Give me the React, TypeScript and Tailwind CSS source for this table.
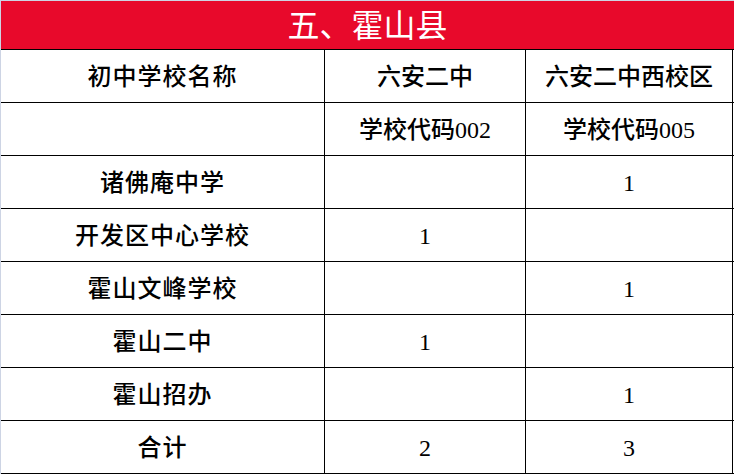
import React from "react";

const rows: [string, string, string][] = [
  ["初中学校名称", "六安二中", "六安二中西校区"],
  ["", "学校代码002", "学校代码005"],
  ["诸佛庵中学", "", "1"],
  ["开发区中心学校", "1", ""],
  ["霍山文峰学校", "", "1"],
  ["霍山二中", "1", ""],
  ["霍山招办", "", "1"],
  ["合计", "2", "3"],
];

export default function App() {
  return (
    <div
      className="w-[734px] h-[474px] bg-white border-t border-l border-[#cdd4e4] box-border overflow-hidden"
      style={{ fontFamily: '"Liberation Serif", "Noto Sans CJK SC", serif' }}
    >
      <div className="h-[49px] bg-[#e8092b] border-b border-black flex items-center justify-center text-white text-[32px] leading-none pt-[2px]">
        五、霍山县
      </div>
      {rows.map((r, i) => (
        <div key={i} className="flex h-[53px] border-b border-black text-black text-[24px] leading-none font-medium">
          <div className="w-[324px] border-r border-black flex items-center justify-center tracking-[1px] pt-[2px]">{r[0]}</div>
          <div className="w-[201px] border-r border-black flex items-center justify-center pt-[2px]">{r[1]}</div>
          <div className="w-[207px] border-r border-black flex items-center justify-center pt-[2px]">{r[2]}</div>
        </div>
      ))}
    </div>
  );
}
